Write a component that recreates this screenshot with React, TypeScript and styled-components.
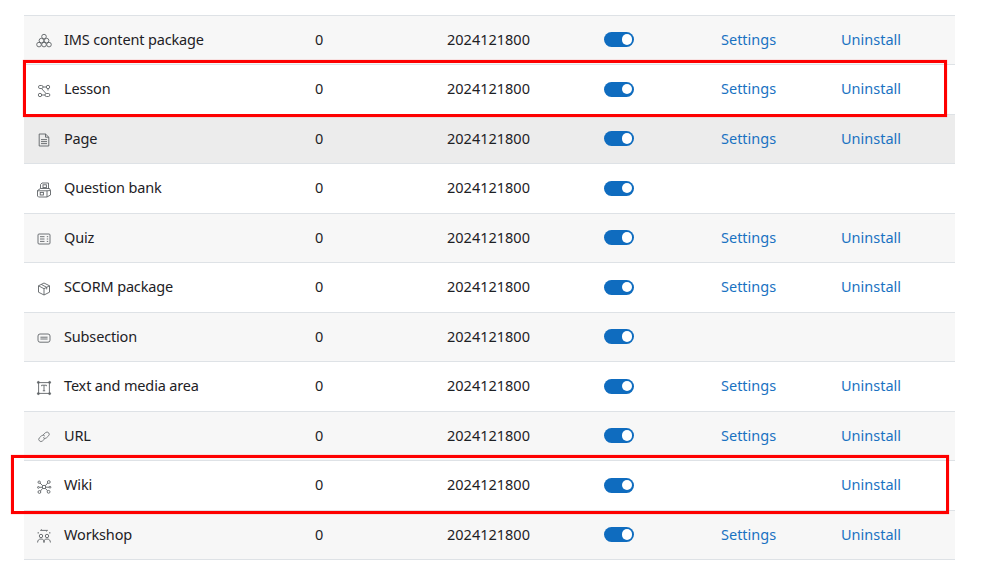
import React from 'react'
import styled, { createGlobalStyle } from 'styled-components'

const GlobalStyle = createGlobalStyle`
  html, body {
    margin: 0;
    padding: 0;
    background: #fff;
    overflow: hidden;
  }
  body {
    font-family: "Noto Sans", "Open Sans", sans-serif;
    font-size: 14.5px;
    color: #1d2125;
  }
`

const Page = styled.div`
  position: relative;
  width: 989px;
  height: 582px;
  padding: 14.75px 34px 0 24px;
  box-sizing: border-box;
`

const PluginTable = styled.table`
  width: 931px;
  table-layout: fixed;
  border-collapse: collapse;
  border-top: 1px solid #dee2e6;
`

const Row = styled.tr<{ $tone: 'plain' | 'striped' | 'hover' }>`
  height: 49.5px;
  border-bottom: 1px solid #dee2e6;
  background: ${(p) =>
    p.$tone === 'hover' ? '#ececec' : p.$tone === 'striped' ? '#f7f7f7' : '#fff'};
`

const Cell = styled.td`
  padding: 0 12px;
  vertical-align: middle;
  white-space: nowrap;
`

const TextCell = styled(Cell)`
  padding-bottom: 3px;
`

const ToggleCell = styled(Cell)`
  padding-bottom: 1px;
`

const NameWrap = styled.div`
  display: flex;
  align-items: center;
  gap: 12px;
`

const NameText = styled.span`
  padding-bottom: 3px;
  letter-spacing: -0.16px;
`

const IconBox = styled.svg`
  width: 16px;
  height: 16px;
  flex: none;
  margin-top: 2px;
  fill: none;
  stroke: #5f6367;
  stroke-width: 0.9;
`

const Toggle = styled.span`
  display: block;
  position: relative;
  width: 30px;
  height: 15px;
  border-radius: 8px;
  background: #0f6cbf;

  &::after {
    content: '';
    position: absolute;
    top: 2.25px;
    right: 2px;
    width: 10.5px;
    height: 10.5px;
    border-radius: 50%;
    background: #fff;
  }
`

const ActionLink = styled.a`
  color: #1a72c2;
  text-decoration: none;
`

const Highlight = styled.div<{ $top: number; $left: number; $width: number; $height: number }>`
  position: absolute;
  top: ${(p) => p.$top}px;
  left: ${(p) => p.$left}px;
  width: ${(p) => p.$width}px;
  height: ${(p) => p.$height}px;
  box-sizing: border-box;
  border: 3px solid #fe0000;
  box-shadow: 0 0 1px rgba(255, 0, 0, 0.5);
  pointer-events: none;
`

const icons: Record<string, React.ReactNode> = {
  ims: (
    <>
      <circle cx="8" cy="3.6" r="2.3" />
      <circle cx="5.4" cy="7.6" r="2.3" />
      <circle cx="10.6" cy="7.6" r="2.3" />
      <circle cx="3" cy="11.6" r="2.3" />
      <circle cx="8" cy="11.6" r="2.3" />
      <circle cx="13" cy="11.6" r="2.3" />
    </>
  ),
  lesson: (
    <>
      <rect x="2.5" y="2.5" width="4.5" height="3" rx="1.4" />
      <circle cx="12" cy="4" r="1.7" />
      <circle cx="4" cy="12" r="1.7" />
      <rect x="9" y="10.5" width="4.8" height="3" rx="1.4" />
      <path d="M7 4h3.3M5.5 5.5l4.5 5M5.7 12h3.3M12 5.7v1.8" />
    </>
  ),
  page: (
    <>
      <path d="M3.2 2h6.3L12.8 5.2V14H3.2z" />
      <path d="M9.5 2v3.2h3.3M5 7.6h6M5 9.6h6M5 11.6h6" />
    </>
  ),
  bank: (
    <>
      <path d="M4.5 6.5V2.5L6 1h6.5v6" />
      <rect x="7" y="2.8" width="3.4" height="2.8" />
      <path d="M1.5 8.5L4.5 6.5H13.5L14.5 8.5V13L11 15H2.5L1.5 14z" />
      <path d="M1.5 8.8H11V15M11 8.8L14.5 8.5" />
      <rect x="4.2" y="10.4" width="3.2" height="2.6" />
    </>
  ),
  quiz: (
    <>
      <rect x="2" y="3" width="12" height="10" rx="1" />
      <path d="M4 5.7h4.5M4 8h4.5M4 10.4h4.5M10.8 5.7h1.4M10.8 8h1.4M10.8 10.4h1.4" />
    </>
  ),
  scorm: (
    <>
      <path d="M8 2l5.5 2.8v6.4L8 14l-5.5-2.8V4.8z" strokeLinejoin="round" />
      <path d="M2.5 4.8L8 7.7l5.5-2.9M8 7.7V14M5.2 3.4l5.5 2.9v2.1" />
    </>
  ),
  subsection: (
    <>
      <rect x="2" y="4" width="12" height="8.2" rx="2" />
      <path d="M4.4 7.2h7.2M4.4 9h7.2" />
    </>
  ),
  label: (
    <>
      <path d="M3.2 2.6h9.6M3.2 13.4h9.6M2.6 3.2v9.6M13.4 3.2v9.6" />
      <rect x="1.4" y="1.4" width="2" height="2" rx="1" fill="#5f6367" />
      <rect x="12.6" y="1.4" width="2" height="2" rx="1" fill="#5f6367" />
      <rect x="1.4" y="12.6" width="2" height="2" rx="1" fill="#5f6367" />
      <rect x="12.6" y="12.6" width="2" height="2" rx="1" fill="#5f6367" />
      <path d="M5.6 6.2V5.2h4.8v1M8 5.2v5.6M6.8 10.8h2.4" />
    </>
  ),
  url: (
    <g strokeWidth="0.8" strokeLinecap="round">
      <path d="M7.4 5.6l2.2-2a2.2 2.2 0 0 1 3.1 3.1l-2.2 2.1a2.2 2.2 0 0 1-3.1 0" />
      <path d="M8.6 9.9l-2.2 2.1a2.2 2.2 0 0 1-3.1-3.1l2.2-2.1a2.2 2.2 0 0 1 3.1 0" />
    </g>
  ),
  wiki: (
    <>
      <circle cx="8" cy="8" r="1.7" />
      <circle cx="3.2" cy="3.2" r="1.2" />
      <circle cx="12.8" cy="3" r="1.4" />
      <circle cx="2.4" cy="8.4" r="0.9" />
      <circle cx="14" cy="8.2" r="0.9" />
      <circle cx="3.4" cy="13" r="1.4" />
      <circle cx="12.6" cy="12.8" r="1.4" />
      <path d="M4 4l2.8 2.8M11.8 4L9.2 6.8M3.3 8.3h3M9.7 8.2h3.4M4.4 12l2.4-2.8M11.6 11.8L9.2 9.2" />
    </>
  ),
  workshop: (
    <>
      <circle cx="5" cy="8" r="1.7" />
      <circle cx="11" cy="8" r="1.7" />
      <path d="M1.6 14.5c0-2.4 1.4-3.5 3.4-3.5s3.4 1.1 3.4 3.5M7.6 14.5c0-2.4 1.4-3.5 3.4-3.5s3.4 1.1 3.4 3.5" />
      <path d="M4.5 2.4h7M4.5 2.4l1.2-1M11.5 2.4l-1.2 1M2.2 4v1.6M13.8 4v1.6" />
    </>
  ),
}

type Plugin = {
  name: string
  icon: string
  settings: boolean
  uninstall: boolean
  tone: 'plain' | 'striped' | 'hover'
}

const plugins: Plugin[] = [
  { name: 'IMS content package', icon: 'ims', settings: true, uninstall: true, tone: 'striped' },
  { name: 'Lesson', icon: 'lesson', settings: true, uninstall: true, tone: 'plain' },
  { name: 'Page', icon: 'page', settings: true, uninstall: true, tone: 'hover' },
  { name: 'Question bank', icon: 'bank', settings: false, uninstall: false, tone: 'plain' },
  { name: 'Quiz', icon: 'quiz', settings: true, uninstall: true, tone: 'striped' },
  { name: 'SCORM package', icon: 'scorm', settings: true, uninstall: true, tone: 'plain' },
  { name: 'Subsection', icon: 'subsection', settings: false, uninstall: false, tone: 'striped' },
  { name: 'Text and media area', icon: 'label', settings: true, uninstall: true, tone: 'plain' },
  { name: 'URL', icon: 'url', settings: true, uninstall: true, tone: 'striped' },
  { name: 'Wiki', icon: 'wiki', settings: false, uninstall: true, tone: 'plain' },
  { name: 'Workshop', icon: 'workshop', settings: true, uninstall: true, tone: 'striped' },
]

export default function App() {
  return (
    <Page>
      <GlobalStyle />
      <PluginTable>
        <colgroup>
          <col style={{ width: 279 }} />
          <col style={{ width: 132 }} />
          <col style={{ width: 157 }} />
          <col style={{ width: 117 }} />
          <col style={{ width: 120 }} />
          <col style={{ width: 126 }} />
        </colgroup>
        <tbody>
          {plugins.map((plugin) => (
            <Row key={plugin.name} $tone={plugin.tone}>
              <Cell>
                <NameWrap>
                  <IconBox viewBox="0 0 16 16">{icons[plugin.icon]}</IconBox>
                  <NameText>{plugin.name}</NameText>
                </NameWrap>
              </Cell>
              <TextCell>0</TextCell>
              <TextCell>2024121800</TextCell>
              <ToggleCell>
                <Toggle />
              </ToggleCell>
              <TextCell>{plugin.settings && <ActionLink href="#">Settings</ActionLink>}</TextCell>
              <TextCell>{plugin.uninstall && <ActionLink href="#">Uninstall</ActionLink>}</TextCell>
            </Row>
          ))}
        </tbody>
      </PluginTable>
      <Highlight $top={60} $left={23} $width={924} $height={56.5} />
      <Highlight $top={455} $left={11} $width={938} $height={59} />
    </Page>
  )
}
